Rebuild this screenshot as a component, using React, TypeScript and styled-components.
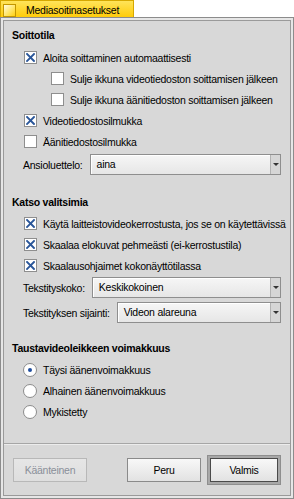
import React from "react";
import styled, { createGlobalStyle } from "styled-components";

const GlobalStyle = createGlobalStyle`
  html, body { margin: 0; padding: 0; background: #ffffff; }
  body {
    font-family: "Liberation Sans", Arial, sans-serif;
    font-size: 10.5px;
    letter-spacing: -0.25px;
    color: #000;
  }
  * { box-sizing: border-box; }
`;

const Window = styled.div`
  width: 294px;
  height: 499px;
  display: flex;
  flex-direction: column;
`;

const TabBar = styled.div`
  height: 17px;
  display: flex;
`;

const Tab = styled.div`
  width: 134px;
  height: 17px;
  border: 1px solid #d6a800;
  border-bottom: none;
  background: linear-gradient(#ffe45a, #ffcc0a);
  display: flex;
  align-items: center;
  padding-left: 2px;
`;

const CloseBox = styled.div`
  width: 13px;
  height: 13px;
  margin-top: 2px;
  border: 1px solid #c29600;
  background: linear-gradient(135deg, #fffbe2 0%, #ffe66a 55%, #ffcf10 100%);
`;

const Title = styled.span`
  margin-left: 10px;
  margin-top: 1px;
  white-space: nowrap;
`;

const Frame = styled.div`
  flex: 1;
  min-width: 0;
  display: flex;
  border: 1px solid #8c8c8c;
  background: #e6e6e6;
  padding: 2px;
`;

const Inner = styled.div`
  flex: 1;
  min-width: 0;
  display: flex;
  flex-direction: column;
  border: 1px solid #9a9a9a;
  background: #d8d8d8;
`;

const Main = styled.div`
  flex: 1;
  min-width: 0;
  display: flex;
  flex-direction: column;
  padding: 6px 9px 0 8px;
`;

const Heading = styled.div<{ $top?: number }>`
  height: 16px;
  line-height: 16px;
  font-weight: bold;
  margin-top: ${(p) => p.$top ?? 0}px;
`;

const Group = styled.div<{ $top?: number }>`
  display: flex;
  flex-direction: column;
  margin-top: ${(p) => p.$top ?? 0}px;
`;

const OptionRow = styled.div<{ $indent?: number }>`
  height: 21px;
  display: flex;
  align-items: center;
  gap: 6px;
  padding-left: ${(p) => p.$indent ?? 12}px;
  white-space: nowrap;
`;

const Box = styled.span`
  width: 13px;
  height: 13px;
  flex: none;
  border: 1px solid #8e8e8e;
  background: #ffffff;
  display: flex;
  align-items: center;
  justify-content: center;
`;

const RadioCircle = styled.span`
  width: 14px;
  height: 14px;
  flex: none;
  border-radius: 50%;
  border: 1px solid #8c8c8c;
  background: #ffffff;
  display: flex;
  align-items: center;
  justify-content: center;
`;

const Dot = styled.span`
  width: 4px;
  height: 4px;
  border-radius: 50%;
  background: #1f4d9e;
`;

const FieldRow = styled.div<{ $top?: number }>`
  height: 21px;
  display: flex;
  align-items: center;
  gap: 7px;
  padding-left: 11px;
  margin-top: ${(p) => p.$top ?? 0}px;
  white-space: nowrap;
`;

const MenuField = styled.div`
  flex: 1;
  min-width: 0;
  height: 21px;
  display: flex;
  border: 1px solid #8e8e8e;
  background: linear-gradient(#f6f6f6, #e6e6e6);
  box-shadow: inset 1px 1px 0 #ffffff;
`;

const MenuText = styled.span`
  flex: 1;
  padding-left: 6px;
  line-height: 19px;
`;

const ArrowBox = styled.span`
  width: 10px;
  flex: none;
  border-left: 1px solid #b2b2b2;
  background: #d6d6d6;
  display: flex;
  align-items: center;
  justify-content: center;
`;

const Arrow = styled.span`
  width: 0;
  height: 0;
  border-left: 3px solid transparent;
  border-right: 3px solid transparent;
  border-top: 3px solid #333;
`;

const Separator = styled.div`
  height: 2px;
  border-top: 1px solid #a6a6a6;
  border-bottom: 1px solid #ececec;
`;

const ButtonBar = styled.div`
  height: 50px;
  display: flex;
  align-items: center;
  padding: 0 9px;
`;

const Spacer = styled.div`
  flex: 1;
`;

const Button = styled.button<{ $disabled?: boolean; $default?: boolean }>`
  width: ${(p) => (p.$default ? 68 : 74)}px;
  height: 24px;
  padding: 0;
  font: inherit;
  letter-spacing: inherit;
  color: ${(p) => (p.$disabled ? "#8a8f99" : "#000")};
  border: 1px solid ${(p) => (p.$disabled ? "#b8b8b8" : p.$default ? "#4a4a4a" : "#8a8a8a")};
  background: ${(p) =>
    p.$disabled ? "linear-gradient(#e6e6e6, #dedede)" : "linear-gradient(#f8f8f8, #e2e2e2)"};
`;

const DefaultFrame = styled.div`
  width: 74px;
  height: 30px;
  margin-left: 6px;
  padding: 2px;
  border: 1px solid #8e8e8e;
  background: #a8a8a8;
  display: flex;
`;

const CheckMark = () => (
  <svg width="9" height="9" viewBox="0 0 9 9">
    <path d="M1 1 L8 8 M8 1 L1 8" stroke="#2a5699" strokeWidth="1.9" strokeLinecap="square" />
  </svg>
);

const Check = ({ checked, label, indent }: { checked?: boolean; label: string; indent?: number }) => (
  <OptionRow $indent={indent}>
    <Box>{checked && <CheckMark />}</Box>
    <span>{label}</span>
  </OptionRow>
);

const Radio = ({ checked, label }: { checked?: boolean; label: string }) => (
  <OptionRow $indent={11}>
    <RadioCircle>{checked && <Dot />}</RadioCircle>
    <span>{label}</span>
  </OptionRow>
);

const Menu = ({ label, value, top }: { label: string; value: string; top?: number }) => (
  <FieldRow $top={top}>
    <span>{label}</span>
    <MenuField>
      <MenuText>{value}</MenuText>
      <ArrowBox>
        <Arrow />
      </ArrowBox>
    </MenuField>
  </FieldRow>
);

export default function App() {
  return (
    <Window>
      <GlobalStyle />
      <TabBar>
        <Tab>
          <CloseBox />
          <Title>Mediasoitinasetukset</Title>
        </Tab>
      </TabBar>
      <Frame>
        <Inner>
          <Main>
            <Heading>Soittotila</Heading>
            <Group $top={4}>
              <Check checked label="Aloita soittaminen automaattisesti" />
              <Check indent={39} label="Sulje ikkuna videotiedoston soittamisen jälkeen" />
              <Check indent={39} label="Sulje ikkuna äänitiedoston soittamisen jälkeen" />
              <Check checked label="Videotiedostosilmukka" />
              <Check label="Äänitiedostosilmukka" />
            </Group>
            <Menu top={2} label="Ansioluettelo:" value="aina" />

            <Heading $top={19}>Katso valitsimia</Heading>
            <Group $top={3}>
              <Check checked label="Käytä laitteistovideokerrostusta, jos se on käytettävissä" />
              <Check checked label="Skaalaa elokuvat pehmeästi (ei-kerrostustila)" />
              <Check checked label="Skaalausohjaimet kokonäyttötilassa" />
            </Group>
            <Menu top={1} label="Tekstityskoko:" value="Keskikokoinen" />
            <Menu top={4} label="Tekstityksen sijainti:" value="Videon alareuna" />

            <Heading $top={17}>Taustavideoleikkeen voimakkuus</Heading>
            <Group $top={3}>
              <Radio checked label="Täysi äänenvoimakkuus" />
              <Radio label="Alhainen äänenvoimakkuus" />
              <Radio label="Mykistetty" />
            </Group>
          </Main>
          <Separator />
          <ButtonBar>
            <Button $disabled>Käänteinen</Button>
            <Spacer />
            <Button>Peru</Button>
            <DefaultFrame>
              <Button $default>Valmis</Button>
            </DefaultFrame>
          </ButtonBar>
        </Inner>
      </Frame>
    </Window>
  );
}
